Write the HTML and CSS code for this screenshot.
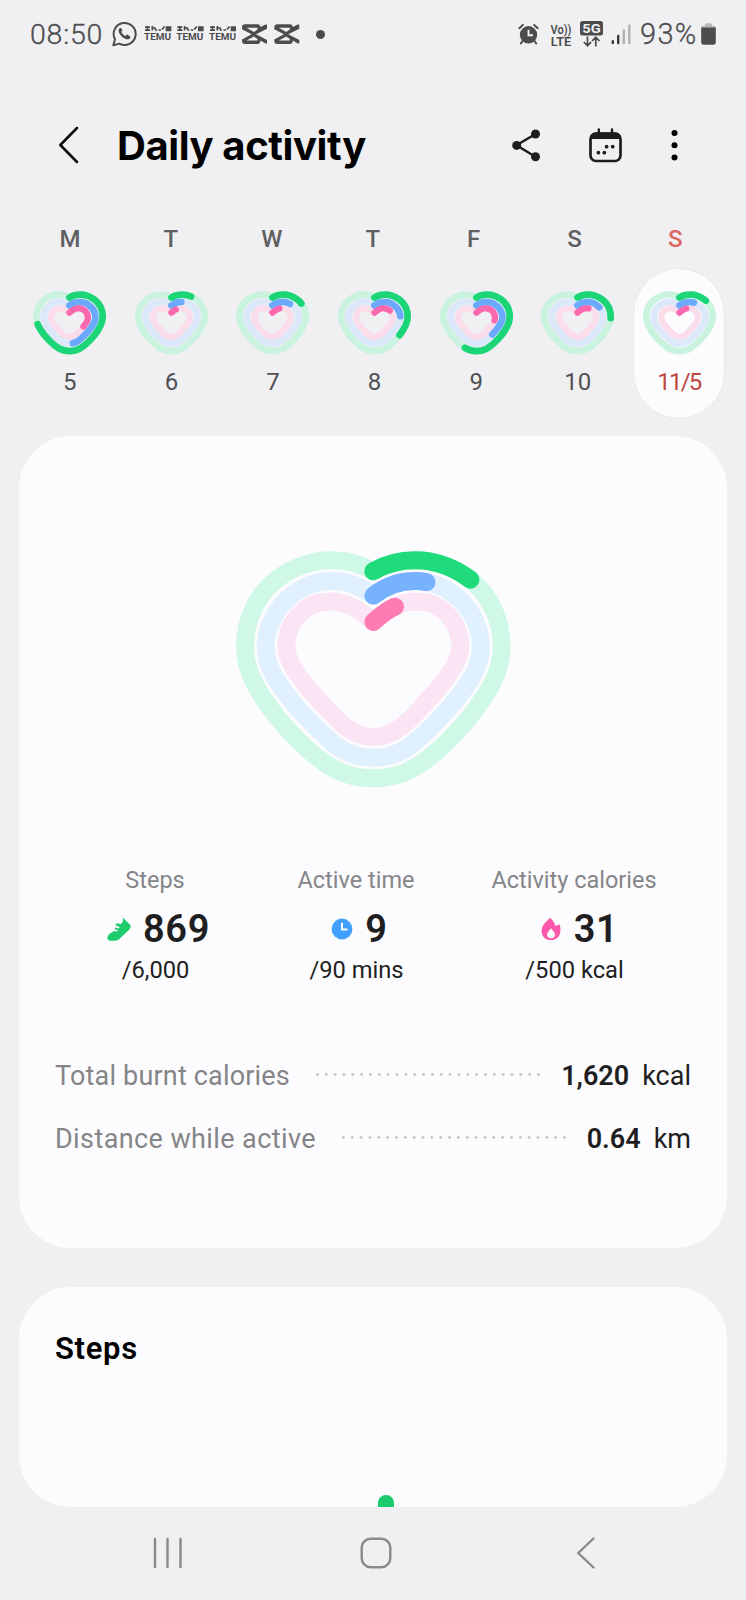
FILE: index.html
```html
<!DOCTYPE html>
<html lang="en">
<head>
<meta charset="utf-8">
<title>Daily activity</title>
<link rel="stylesheet" href="styles.css">
</head>
<body>
<svg class="defs" width="0" height="0" aria-hidden="true">
  <defs>
    <path id="outer" d="M460 124C500 100 540 91 586 91C650 91 705 115 750 148C810 195 845 270 845 350C845 430 800 495 750 560C700 620 640 680 580 715C540 738 500 745 460 745C420 745 380 738 340 715C280 680 220 620 170 560C120 495 75 430 75 350C75 270 110 195 170 148C215 115 270 91 334 91C380 91 420 100 460 124"/>
    <path id="middle" d="M460 197C500 165 540 153 586 153C630 153 680 170 715 205C760 245 783 300 783 352C783 415 740 470 695 525C655 570 605 625 560 655C525 677 490 683 460 683C430 683 395 677 360 655C315 625 265 570 225 525C180 470 137 415 137 352C137 300 160 245 205 205C240 170 290 153 334 153C380 153 420 165 460 197"/>
    <path id="inner" d="M460 276C480 258 500 240 525 230C550 218 575 214 598 215C665 217 721 275 721 352C721 385 695 425 665 463C630 505 580 560 545 590C515 613 490 621 460 621C430 621 405 613 375 590C340 560 290 505 255 463C225 425 199 385 199 352C199 275 255 217 322 215C345 214 370 218 395 230C420 240 440 258 460 276"/>
    <g id="mini-tracks">
      <use href="#outer" class="mini-track-g"/>
      <use href="#middle" class="mini-track-b" transform="translate(32.2 36) scale(.93 .91)"/>
      <use href="#inner" class="mini-track-p" transform="translate(82.8 72) scale(.82)"/>
    </g>
    <g id="temu">
      <path d="M1 1.200h5M3.500 0v4M1 4.200h5M8.300 0v4.500M8.300 2h3.500M10.600 2l2 2.800M14.500 4h2.500M18 3.500l2.500-3M22.500 1.200h4v3.200h-4zM22 2.800h5" fill="none" stroke="#4c4c4e" stroke-width="1.700"/>
      <text x="0" y="14.200" font-size="8.600" font-weight="700" textLength="27" lengthAdjust="spacingAndGlyphs" fill="#4c4c4e">TEMU</text>
    </g>
    <path id="capcut" d="M25 1.500v3.200L14 10.300 25 16v3.400h-1.500L18.500 16.600c-.2 2.300-1 3.400-3 3.400H3c-2 0-3-1-3-3v-1.600L9.600 10.300 0 5.200V3.500C0 1.200 1 .2 3 .2h12.500c1.900 0 2.800 1 3 2.900L23.500.6H25zM4.500 3.800 11.900 8.100 15.500 5.400V3.800zM4.500 16.500h11v-1.400l-3.600-2.500z" fill="#4c4c4e" fill-rule="evenodd"/>
  </defs>
</svg>

<div class="screen">
  <header class="status">
    <div class="status-left">
      <span class="clock">08:50</span>
      <svg class="whatsapp" width="26" height="26" viewBox="0 0 26 26"><path d="M1.300 24.200 3 18.200A11 11 0 1 1 7.400 22.600z" fill="none" stroke="#4c4c4e" stroke-width="2" stroke-linejoin="round"/><path d="M9.300 7.200c-.7-.6-1.600-.3-2.200.6-1.500 2.400.3 5.300 2.700 7.600 2.500 2.400 5.700 3.800 7.700 2.300.9-.7 1.100-1.700.7-2.300l-2.500-1.700c-.6-.3-1-.1-1.500.6-.5.700-.9.700-1.700.2-1.400-.8-2.400-1.900-3-3.200-.3-.7.800-1.200.9-2z" fill="#4c4c4e"/></svg>
      <svg class="temu" width="92" height="16" viewBox="0 0 92 16"><use href="#temu"/><use href="#temu" x="32.300"/><use href="#temu" x="65"/></svg>
      <svg class="capcut" width="58" height="21" viewBox="0 0 58 21"><use href="#capcut"/><use href="#capcut" x="32.300"/></svg>
      <i class="more-dot"></i>
    </div>
    <div class="status-right">
      <svg width="22" height="22" viewBox="0 0 22 22"><circle cx="10.500" cy="11.800" r="8.700" fill="#4c4c4e"/><path d="M4.500 18 2.800 20.500M16.500 18l1.700 2.500M1.300 5.200 4.800 2M19.700 5.200 16.200 2" stroke="#4c4c4e" stroke-width="2" stroke-linecap="round"/><path d="M10.500 6.800v5.500H15" fill="none" stroke="#f0f0f3" stroke-width="1.900"/></svg>
      <svg class="volte" width="23" height="24" viewBox="0 0 23 24"><text x="0.500" y="10.500" font-size="12" font-weight="600" textLength="21" lengthAdjust="spacingAndGlyphs" fill="#4c4c4e">Vo))</text><text x="0.800" y="22.500" font-size="13" font-weight="600" textLength="20.500" lengthAdjust="spacingAndGlyphs" fill="#4c4c4e">LTE</text></svg>
      <svg class="fiveg" width="23" height="27" viewBox="0 0 23 27"><rect width="23" height="14.500" rx="2.500" fill="#4c4c4e"/><text x="2.300" y="12" font-size="13.500" font-weight="700" textLength="18.500" lengthAdjust="spacingAndGlyphs" fill="#f0f0f3">5G</text><path d="M7.500 15.500v9M3.800 21l3.700 3.700 3.700-3.700M15.800 25.500v-9M12.100 20l3.700-3.700 3.700 3.700" fill="none" stroke="#4c4c4e" stroke-width="1.700"/></svg>
      <svg class="signal" width="20" height="21" viewBox="0 0 20 21"><g stroke-width="2.400" stroke-linecap="round"><path d="M1.800 17.300v1.800M7.200 12v7.100" stroke="#39393b"/><path d="M12.800 6.500v12.600M18.300 1.500v17.600" stroke="#b2b2b4"/></g></svg>
      <span class="percent">93%</span>
      <svg class="battery" width="15" height="22" viewBox="0 0 15 22"><path d="M.5 5c0-1.500.8-2.200 2-2.200H4V2C4 1 4.600.2 5.500.2h4C10.400.2 11 1 11 2v.8h1.500c1.200 0 2 .7 2 2.200z" fill="#b8b8ba"/><path d="M.2 4.500h14.600v14.500c0 1.800-.9 2.700-2.500 2.700H2.700C1.100 21.700.2 20.800.2 19z" fill="#4c4c4e"/></svg>
    </div>
  </header>

  <nav class="appbar">
    <svg width="22" height="38" viewBox="0 0 22 38"><path d="M20 2 3.300 19 20 36" fill="none" stroke="#0a0a0a" stroke-width="2.500" stroke-linecap="round" stroke-linejoin="round"/></svg>
    <h1>Daily activity</h1>
    <svg class="share" width="28" height="33" viewBox="0 0 28 33"><path d="M23.500 5 4.500 16.300 23.500 27.800" fill="none" stroke="#1d1d1f" stroke-width="2.500"/><g fill="#1d1d1f"><circle cx="23.500" cy="5" r="4.500"/><circle cx="4.700" cy="16.400" r="4.500"/><circle cx="23.500" cy="27.800" r="4.500"/></g></svg>
    <svg class="calendar" width="33" height="35" viewBox="0 0 33 35"><rect x="1.500" y="5.500" width="30" height="27.500" rx="5.500" fill="none" stroke="#1d1d1f" stroke-width="2.700"/><path d="M1 11C1 7 3 4.500 7 4.500h19c4 0 6 2.500 6 6.500z" fill="#1d1d1f"/><path d="M9.800 1.500V6M23 1.500V6" stroke="#1d1d1f" stroke-width="2.400" stroke-linecap="round"/><g fill="#1d1d1f"><circle cx="17.600" cy="18.700" r="1.900"/><circle cx="23.700" cy="18.700" r="1.900"/><circle cx="9.400" cy="24.700" r="1.900"/><circle cx="15.300" cy="24.700" r="1.900"/></g></svg>
    <svg class="kebab" width="8" height="32" viewBox="0 0 8 32"><circle cx="4.500" cy="4" r="3"/><circle cx="4.500" cy="16.200" r="3"/><circle cx="4.500" cy="28.400" r="3"/></svg>
  </nav>

  <div class="weekdays"><b>M</b><b>T</b><b>W</b><b>T</b><b>F</b><b>S</b><b class="sunday">S</b></div>
  <section class="week">
    <div class="pill"><svg class="mini" viewBox="37 53 846 732"><use href="#mini-tracks"/><use href="#outer" class="mini-g" stroke-dasharray="1634 9999"/><use href="#middle" class="mini-b" stroke-dasharray="890 9999" transform="translate(32.200 36) scale(.93 .91)"/><use href="#inner" class="mini-p" stroke-dasharray="497 9999" transform="translate(82.800 72) scale(.82)"/></svg><span>5</span></div>
    <div class="pill"><svg class="mini" viewBox="37 53 846 732"><use href="#mini-tracks"/><use href="#outer" class="mini-g" stroke-dasharray="235 9999"/><use href="#middle" class="mini-b" stroke-dasharray="132 9999" transform="translate(32.200 36) scale(.93 .91)"/><use href="#inner" class="mini-p" stroke-dasharray="75 9999" transform="translate(82.800 72) scale(.82)"/></svg><span>6</span></div>
    <div class="pill"><svg class="mini" viewBox="37 53 846 732"><use href="#mini-tracks"/><use href="#outer" class="mini-g" stroke-dasharray="370 9999"/><use href="#middle" class="mini-b" stroke-dasharray="230 9999" transform="translate(32.200 36) scale(.93 .91)"/><use href="#inner" class="mini-p" stroke-dasharray="112 9999" transform="translate(82.800 72) scale(.82)"/></svg><span>7</span></div>
    <div class="pill"><svg class="mini" viewBox="37 53 846 732"><use href="#mini-tracks"/><use href="#outer" class="mini-g" stroke-dasharray="772 9999"/><use href="#middle" class="mini-b" stroke-dasharray="425 9999" transform="translate(32.200 36) scale(.93 .91)"/><use href="#inner" class="mini-p" stroke-dasharray="240 9999" transform="translate(82.800 72) scale(.82)"/></svg><span>8</span></div>
    <div class="pill"><svg class="mini" viewBox="37 53 846 732"><use href="#mini-tracks"/><use href="#outer" class="mini-g" stroke-dasharray="1270 9999"/><use href="#middle" class="mini-b" stroke-dasharray="697 9999" transform="translate(32.200 36) scale(.93 .91)"/><use href="#inner" class="mini-p" stroke-dasharray="393 9999" transform="translate(82.800 72) scale(.82)"/></svg><span>9</span></div>
    <div class="pill"><svg class="mini" viewBox="37 53 846 732"><use href="#mini-tracks"/><use href="#outer" class="mini-g" stroke-dasharray="550 9999"/><use href="#middle" class="mini-b" stroke-dasharray="300 9999" transform="translate(32.200 36) scale(.93 .91)"/><use href="#inner" class="mini-p" stroke-dasharray="172 9999" transform="translate(82.800 72) scale(.82)"/></svg><span>10</span></div>
    <div class="pill today"><svg class="mini" viewBox="37 53 846 732"><use href="#mini-tracks"/><use href="#outer" class="mini-g" stroke-dasharray="326 9999"/><use href="#middle" class="mini-b" stroke-dasharray="190 9999" transform="translate(32.200 36) scale(.93 .91)"/><use href="#inner" class="mini-p" stroke-dasharray="110 9999" transform="translate(82.800 72) scale(.82)"/></svg><span>11/5</span></div>
  </section>

  <main class="card summary">
    <svg class="heart" viewBox="0 0 930 810">
      <use href="#outer" class="track-g"/><use href="#middle" class="track-b"/><use href="#inner" class="track-p"/>
      <use href="#outer" class="g" stroke-dasharray="310 9999"/><use href="#middle" class="b" stroke-dasharray="170 9999"/><use href="#inner" class="p" stroke-dasharray="80 9999"/>
    </svg>
    <div class="stats">
      <div class="stat">
        <span class="label">Steps</span>
        <div class="value"><svg width="24" height="24" viewBox="0 0 24 24"><path d="M15.800.5 23.600 8.200c.3 2-.6 3.600-2 5-2.800 2.900-5.600 5-8.100 7.800-1.600 1.800-3.500 2.700-5.800 2.700H3c-2-.1-2.900-1.600-2.400-3.600.4-1.900 1.500-3 3.200-4L7 14l3.300.6.5-1.400L7.400 12l.9-1.400 3.600.9.700-1.500-4.200-1.800 1.100-2 4.300.9c1.800-1.200 2.400-2.900 2-6.600z" fill="#1fcc6d"/></svg><strong>869</strong></div>
        <span class="goal">/6,000</span>
      </div>
      <div class="stat">
        <span class="label">Active time</span>
        <div class="value"><svg width="22" height="22" viewBox="0 0 22 22"><circle cx="11" cy="11" r="10.400" fill="#419fff"/><path d="M11 4.800v6.700h5.500" fill="none" stroke="#fff" stroke-width="1.900"/></svg><strong>9</strong></div>
        <span class="goal">/90 mins</span>
      </div>
      <div class="stat">
        <span class="label">Activity calories</span>
        <div class="value calories"><svg width="20" height="24" viewBox="0 0 20 24"><path d="M9 .8C5.500 4.800.6 7.900.6 14.200c0 5.200 4 8.900 9.300 8.900s9.500-3.600 9.500-9.100c0-2.700.1-4.100-.6-6.200-1.900.3-3.300.5-4.600 1.300C13.800 5.500 11.400 3 9 .8z" fill="#fb58aa"/><path d="M10 11.200c-2 2.700-4 4.300-4 6.600 0 2.100 1.700 3.500 4 3.500s4-1.400 4-3.500c0-2.300-2-3.900-4-6.600z" fill="#fcfcff"/></svg><strong>31</strong></div>
        <span class="goal">/500 kcal</span>
      </div>
    </div>
    <div class="facts">
      <div class="fact"><span class="name burnt">Total burnt calories</span><i class="dots"></i><strong>1,620</strong><span class="unit">kcal</span></div>
      <div class="fact"><span class="name distance">Distance while active</span><i class="dots"></i><strong>0.64</strong><span class="unit">km</span></div>
    </div>
  </main>

  <section class="card steps">
    <h2>Steps</h2>
    <i class="bar"></i>
  </section>

  <footer class="navbar">
    <svg width="30" height="32" viewBox="0 0 30 32"><path d="M2 2v28M14.500 2v28M27.500 2v28" stroke="#89898c" stroke-width="2.400" stroke-linecap="round"/></svg>
    <svg class="home" width="32" height="32" viewBox="0 0 32 32"><rect x="1.700" y="1.700" width="28.600" height="28.600" rx="9" fill="none" stroke="#89898c" stroke-width="2.400"/></svg>
    <svg width="20" height="32" viewBox="0 0 20 32"><path d="M17.500 1.500 2.200 16l15.300 14.500" fill="none" stroke="#89898c" stroke-width="2.400" stroke-linecap="round" stroke-linejoin="round"/></svg>
  </footer>
</div>
</body>
</html>
```
FILE: styles.css
```css
* { box-sizing: border-box; }
body { margin: 0; background: #f0f0f3; font-family: Roboto, "Liberation Sans", sans-serif; color: #1f1f22; }
svg { display: block; flex: none; }
h1, h2 { margin: 0; }
.defs { height: 0; }
.screen { width: 746px; height: 1600px; display: flex; flex-direction: column; overflow: hidden; }

.status { height: 68px; padding: 0 30px; display: flex; justify-content: space-between; align-items: center; color: #4c4c4e; }
.status-left, .status-right { display: flex; align-items: center; }
.clock { font-size: 28.5px; font-weight: 300; width: 82px; letter-spacing: .8px; -webkit-text-stroke: .3px #4c4c4e; }
.temu { margin-left: 6px; margin-bottom: 1px; }
.capcut { margin-left: 6px; }
.more-dot { width: 9px; height: 9px; border-radius: 50%; background: #4c4c4e; margin-left: 16px; }
.volte { margin-left: 10px; margin-top: 2px; }
.fiveg { margin-left: 7px; }
.signal { margin-left: 8px; }
.percent { font-size: 29px; font-weight: 300; margin-left: 9px; width: 60px; letter-spacing: 1.3px; -webkit-text-stroke: .3px #4c4c4e; white-space: nowrap; }
.battery { margin-left: 1px; }

.appbar { height: 154px; padding: 0 68px 0 57px; display: flex; align-items: center; }
.appbar h1 { margin-left: 38px; font-family: Inter, Roboto, sans-serif; font-size: 40px; font-weight: 700; letter-spacing: -.4px; line-height: 48px; padding-top: 1px; color: #000; width: 398px; }
.calendar { margin-left: 49px; }
.kebab { margin-left: 48px; }

.weekdays { padding-left: 19.6px; display: grid; grid-template-columns: repeat(7, 100.9px); text-align: center; font-size: 24px; line-height: 34px; height: 46px; color: #606063; }
.weekdays b { font-weight: 500; }
.weekdays .sunday { color: #dc6764; }
.week { height: 168px; padding-left: 19px; display: grid; grid-template-columns: repeat(7, 101.6px); justify-items: center; }
.pill { width: 92px; height: 151px; border-radius: 46px; display: flex; flex-direction: column; align-items: center; padding-top: 22px; border: 1px solid transparent; }
.mini { width: 73px; height: 64px; overflow: visible; }
.pill span { font-size: 24px; line-height: 28px; margin-top: 13px; color: #505054; }
.today { background: #fcfcff; border-color: #e9e9ec; }
.today span { color: #bd4740; letter-spacing: -1.8px; margin-left: -1px; }

.track-g, .track-b, .track-p, .g, .b, .p { fill: none; stroke-width: 54px; stroke-linejoin: round; }
.g, .b, .p, .mini-g, .mini-b, .mini-p { stroke-linecap: round; }
.track-g { stroke: #d0f8e6; }
.track-b { stroke: #e0f0ff; }
.track-p { stroke: #fbe5f4; }
.g { stroke: #1fdb7c; }
.b { stroke: #77b2ff; }
.p { stroke: #ff7bb4; }
.mini-track-g, .mini-g { fill: none; stroke-width: 78px; }
.mini-track-b, .mini-b { fill: none; stroke-width: 84px; }
.mini-track-p, .mini-p { fill: none; stroke-width: 88px; }
.mini-track-g { stroke: #c9f2df; }
.mini-track-b { stroke: #dbe8fa; }
.mini-track-p { stroke: #fadcea; }
.mini-g { stroke: #1bd577; }
.mini-b { stroke: #6ba9fc; }
.mini-p { stroke: #fc68ae; }

.card { margin: 0 19px; background: #fcfcff; border-radius: 52px; flex: none; }
.summary { height: 812px; padding: 94px 36px 0 36px; }
.heart { width: 310px; height: 270px; margin-left: 165px; }
.stats { margin-top: 64px; display: grid; grid-template-columns: 200px 202px 234px; }
.stat { display: flex; flex-direction: column; align-items: center; }
.label { font-size: 23.5px; line-height: 32px; color: #858588; white-space: nowrap; }
.value { height: 44px; margin-top: 11px; display: flex; align-items: center; gap: 12px; margin-left: 7px; }
.calories { gap: 13px; margin-left: 11px; }
.value strong { font-size: 38px; line-height: 44px; font-weight: 600; letter-spacing: .6px; }
.goal { font-size: 23.7px; line-height: 32px; margin-top: 3px; margin-left: 1px; }
.facts { margin-top: 74px; display: grid; gap: 31px; }
.fact { height: 32px; display: flex; align-items: center; font-size: 27px; line-height: 32px; white-space: nowrap; }
.name { color: #858588; }
.burnt { letter-spacing: .18px; }
.distance { letter-spacing: .4px; }
.fact strong { font-weight: 600; }
.unit { margin-left: 13px; }
.dots { flex: 1; height: 3px; margin: 0 21px 4px 23px; background: radial-gradient(circle, #c4c4c7 1.1px, transparent 1.6px) 0 0 / 8.85px 3px; }

.steps { height: 220px; margin-top: 39px; padding: 42px 36px 0; display: flex; flex-direction: column; overflow: hidden; }
.steps h2 { font-size: 31px; line-height: 40px; font-weight: 600; letter-spacing: .7px; color: #000; }
.bar { width: 16px; height: 12px; border-radius: 8px 8px 0 0; background: #1bcb6e; margin: auto 0 0 323px; }

.navbar { flex: none; height: 92px; padding: 0 150px 0 153px; display: flex; justify-content: space-between; align-items: center; }
.home { margin-right: 8px; }
```
